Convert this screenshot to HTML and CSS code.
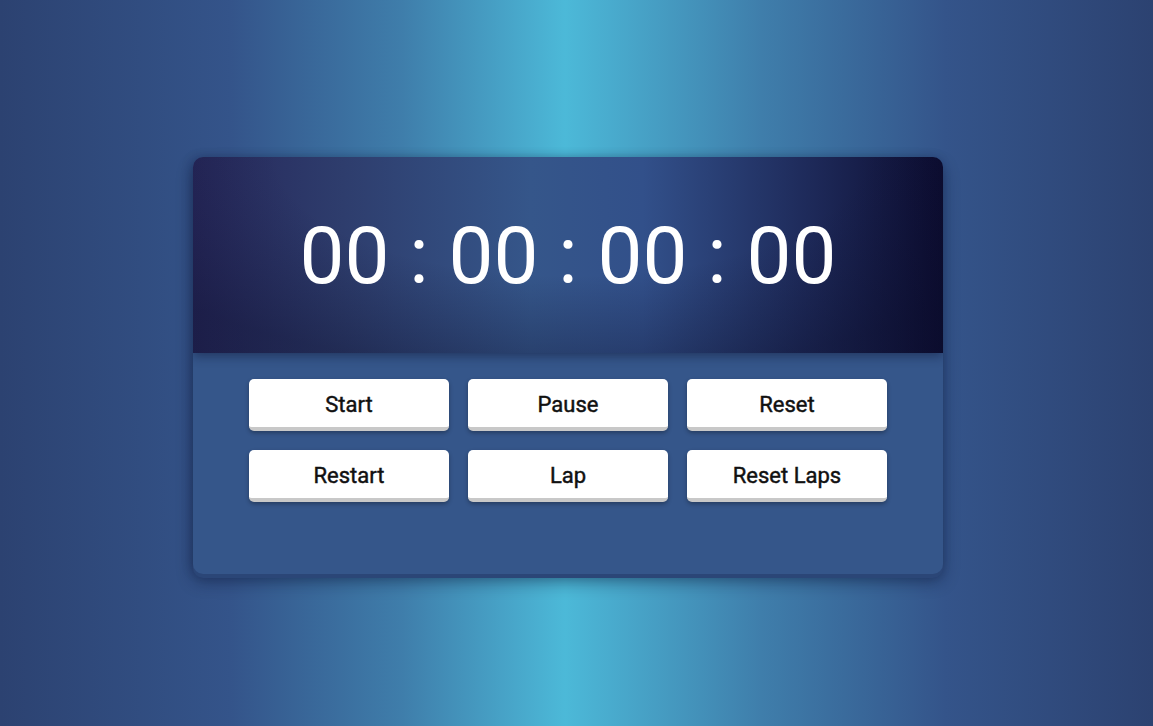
FILE: index.html
```html
<!DOCTYPE html>
<html>
<head>
<meta charset="utf-8">
<link rel="stylesheet" href="styles.css">
</head>
<body>
<main class="page">
  <section class="stopwatch">
    <div class="display">00 : 00 : 00 : 00</div>
    <div class="controls">
      <button class="btn">Start</button>
      <button class="btn">Pause</button>
      <button class="btn">Reset</button>
      <button class="btn">Restart</button>
      <button class="btn">Lap</button>
      <button class="btn">Reset Laps</button>
    </div>
  </section>
</main>
</body>
</html>
```
FILE: styles.css
```css
html, body {
  margin: 0;
  padding: 0;
  height: 100%;
}
body {
  background: linear-gradient(to right, #2c4271 0%, #34548a 20%, #3f7eab 35%, #4cb9d8 49%, #3f7eab 66%, #34548a 82%, #2c4271 100%);
  font-family: Roboto, "Liberation Sans", sans-serif;
  overflow: hidden;
}
.page {
  display: flex;
  justify-content: center;
  padding: 157px 17px 0 0;
}
.stopwatch {
  width: 750px;
  background: #35568a;
  border-radius: 10px;
  box-shadow: 0 4px 0 #2b4677, 0 8px 16px rgba(10, 20, 50, 0.45), -2px 0 10px rgba(10, 20, 50, 0.25);
  overflow: hidden;
}
.display {
  height: 196px;
  display: flex;
  align-items: center;
  justify-content: center;
  color: #fff;
  font-size: 80px;
  font-weight: 400;
  padding-top: 2px;
  box-sizing: border-box;
  background:
    radial-gradient(ellipse 70% 110% at 50% 0%, rgba(0,0,0,0) 55%, rgba(10,12,40,0.35) 100%),
    linear-gradient(to right, #26275a 0%, #2e3d6d 20%, #35568a 45%, #32508a 60%, #1e2a5a 82%, #0c0c30 100%);
  box-shadow: 0 3px 10px rgba(10, 15, 45, 0.45);
  position: relative;
}
.controls {
  display: grid;
  grid-template-columns: repeat(3, 200px);
  column-gap: 19px;
  row-gap: 19px;
  padding: 26px 56px 72px;
}
.btn {
  height: 52px;
  background: #fff;
  border: none;
  border-bottom: 4px solid #c8c8c8;
  border-radius: 5px;
  box-shadow: 0 2px 4px rgba(0, 0, 0, 0.3);
  font-family: Roboto, "Liberation Sans", sans-serif;
  font-size: 22px;
  font-weight: 400;
  -webkit-text-stroke: 0.45px #111;
  color: #111;
  padding: 3px 0 0;
  cursor: pointer;
}
```
